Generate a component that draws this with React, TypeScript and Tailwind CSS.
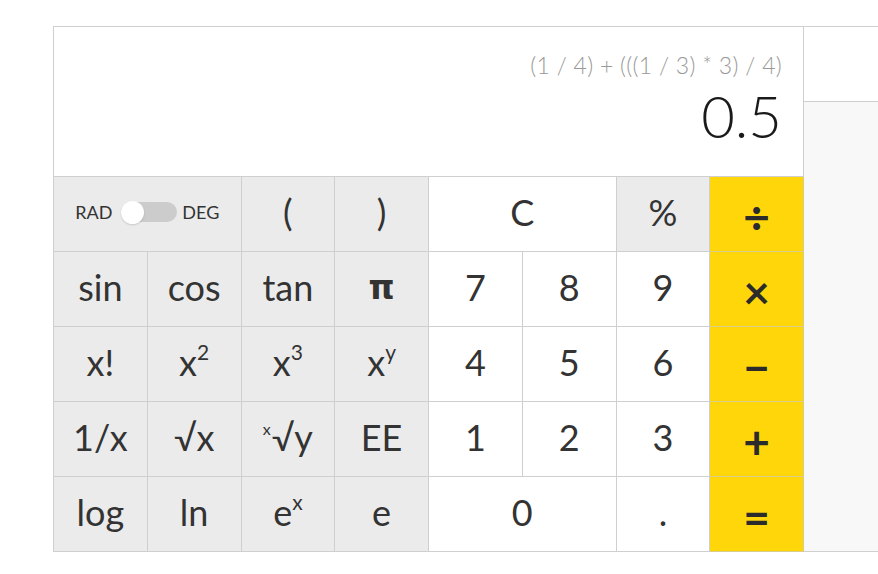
import React from "react";

type Key = {
  label: React.ReactNode;
  kind: "fn" | "num" | "op";
  span?: number;
};

const Sup = ({ children }: { children: React.ReactNode }) => (
  <sup className="text-[21px] leading-none align-[9px]">{children}</sup>
);

const Toggle = () => (
  <div className="flex items-center text-[18px] leading-none">
    <span className="mr-[9px]">RAD</span>
    <span className="relative flex h-[20px] w-[56px] items-center rounded-full bg-[#cccccc]">
      <span className="absolute left-0 h-[23px] w-[23px] rounded-full bg-white shadow-[0_1px_2px_rgba(0,0,0,0.15)]" />
    </span>
    <span className="ml-[5px]">DEG</span>
  </div>
);

const keys: Key[] = [
  { label: <Toggle />, kind: "fn", span: 2 },
  { label: "(", kind: "fn" },
  { label: ")", kind: "fn" },
  { label: "C", kind: "num", span: 2 },
  { label: "%", kind: "fn" },
  { label: "÷", kind: "op" },

  { label: "sin", kind: "fn" },
  { label: "cos", kind: "fn" },
  { label: "tan", kind: "fn" },
  {
    label: <span className="font-['DejaVu_Sans',sans-serif] text-[33px] font-bold">π</span>,
    kind: "fn",
  },
  { label: "7", kind: "num" },
  { label: "8", kind: "num" },
  { label: "9", kind: "num" },
  { label: "×", kind: "op" },

  { label: "x!", kind: "fn" },
  { label: <>x<Sup>2</Sup></>, kind: "fn" },
  { label: <>x<Sup>3</Sup></>, kind: "fn" },
  { label: <>x<Sup>y</Sup></>, kind: "fn" },
  { label: "4", kind: "num" },
  { label: "5", kind: "num" },
  { label: "6", kind: "num" },
  { label: "−", kind: "op" },

  { label: "1/x", kind: "fn" },
  { label: "√x", kind: "fn" },
  {
    label: (
      <>
        <sup className="text-[16px] leading-none align-[12px] mr-[1px]">x</sup>√y
      </>
    ),
    kind: "fn",
  },
  { label: "EE", kind: "fn" },
  { label: "1", kind: "num" },
  { label: "2", kind: "num" },
  { label: "3", kind: "num" },
  { label: "+", kind: "op" },

  { label: "log", kind: "fn" },
  { label: "ln", kind: "fn" },
  { label: <>e<Sup>x</Sup></>, kind: "fn" },
  { label: "e", kind: "fn" },
  { label: "0", kind: "num", span: 2 },
  { label: ".", kind: "num" },
  { label: "=", kind: "op" },
];

const cellStyle = {
  fn: "bg-[#ebebeb] border-[#cfcfcf] text-[#333333] text-[36px] pb-[4px]",
  num: "bg-white border-[#cfcfcf] text-[#333333] text-[36px] pb-[4px]",
  op: "bg-[#ffd60a] border-[#d8cd8a] text-[#2b2b2b] text-[46px] font-bold pt-[6px]",
};

export default function App() {
  return (
    <div className="flex min-h-screen bg-white pt-[26px] pl-[53px] font-['Lato','Liberation_Sans',sans-serif]">
      {/* calculator */}
      <div className="h-[526px] w-[751px] shrink-0 border-l border-t border-[#cfcfcf]">
        <div className="flex h-[150px] flex-col items-end border-r border-b border-[#cfcfcf] bg-white pt-[27px] pr-[21px]">
          <div className="text-[23px] font-light leading-none tracking-[0.3px] text-[#999999]">
            (1 / 4) + (((1 / 3) * 3) / 4)
          </div>
          <div className="mt-[10px] text-[58px] font-light leading-none text-[#1a1a1a]">0.5</div>
        </div>
        <div className="grid grid-cols-8">
          {keys.map((k, i) => (
            <div
              key={i}
              className={`flex h-[75px] items-center justify-center border-r border-b leading-none ${cellStyle[k.kind]} ${k.span === 2 ? "col-span-2" : ""}`}
            >
              {k.label}
            </div>
          ))}
        </div>
      </div>

      {/* side panel */}
      <div className="flex h-[526px] flex-1 flex-col border-t border-b border-[#cfcfcf]">
        <div className="h-[75px] border-b border-[#cfcfcf] bg-white" />
        <div className="flex-1 bg-[#f8f8f8]" />
      </div>
    </div>
  );
}
